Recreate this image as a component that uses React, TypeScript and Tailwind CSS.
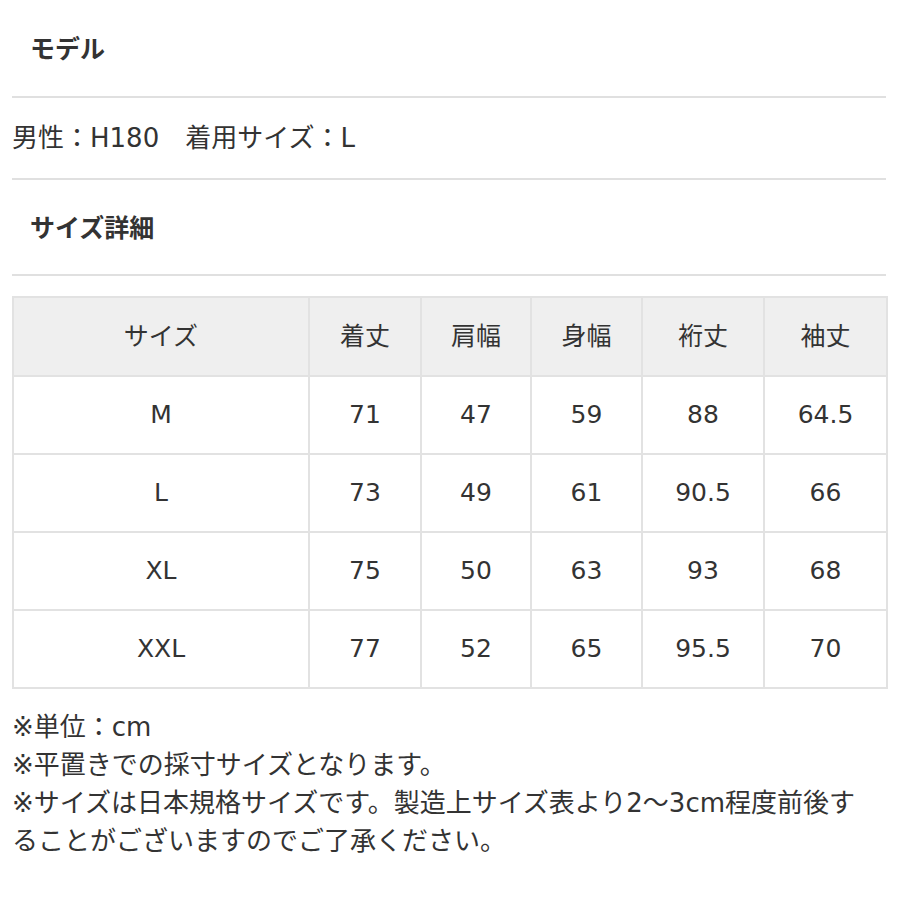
import React from "react";

const headers = ["サイズ", "着丈", "肩幅", "身幅", "裄丈", "袖丈"];

const rows = [
  ["M", "71", "47", "59", "88", "64.5"],
  ["L", "73", "49", "61", "90.5", "66"],
  ["XL", "75", "50", "63", "93", "68"],
  ["XXL", "77", "52", "65", "95.5", "70"],
];

const colWidths = ["w-[296px]", "w-[112px]", "w-[110px]", "w-[111px]", "w-[122px]", "w-[123px]"];

const notes = [
  "※単位：cm",
  "※平置きでの採寸サイズとなります。",
  "※サイズは日本規格サイズです。製造上サイズ表より2～3cm程度前後す",
  "ることがございますのでご了承ください。",
];

export default function App() {
  return (
    <div
      className="w-[900px] h-[900px] bg-white text-[#333] px-[12px]"
      style={{ fontFamily: '"DejaVu Sans", "Noto Sans CJK JP", sans-serif' }}
    >
      {/* モデル */}
      <div className="h-[98px] flex items-center pl-[18px] border-b-2 border-[#e0e0e0] w-[874px]">
        <h2 className="text-[25px] font-bold" style={{ fontFamily: '"Noto Sans CJK JP", sans-serif' }}>
          モデル
        </h2>
      </div>
      <div className="h-[82px] flex items-center border-b-2 border-[#e0e0e0] w-[874px]">
        <p className="text-[26px]">男性：H180　着用サイズ：L</p>
      </div>

      {/* サイズ詳細 */}
      <div className="h-[96px] flex items-center pl-[18px] border-b-2 border-[#e0e0e0] w-[874px]">
        <h2 className="text-[25px] font-bold" style={{ fontFamily: '"Noto Sans CJK JP", sans-serif' }}>
          サイズ詳細
        </h2>
      </div>

      <table className="mt-[20px] border-collapse text-[25px] w-[874px] table-fixed">
        <colgroup>
          {colWidths.map((w, i) => (
            <col key={i} className={w} />
          ))}
        </colgroup>
        <thead>
          <tr className="bg-[#efefef] h-[79px]">
            {headers.map((h) => (
              <th key={h} className="border-2 border-[#e2e2e2] font-normal text-center">
                {h}
              </th>
            ))}
          </tr>
        </thead>
        <tbody>
          {rows.map((row) => (
            <tr key={row[0]} className="h-[78px]">
              {row.map((cell, i) => (
                <td key={i} className="border-2 border-[#e2e2e2] text-center">
                  {cell}
                </td>
              ))}
            </tr>
          ))}
        </tbody>
      </table>

      {/* Notes */}
      <div className="mt-[19px] text-[26px] leading-[38px]">
        {notes.map((n) => (
          <p key={n}>{n}</p>
        ))}
      </div>
    </div>
  );
}
